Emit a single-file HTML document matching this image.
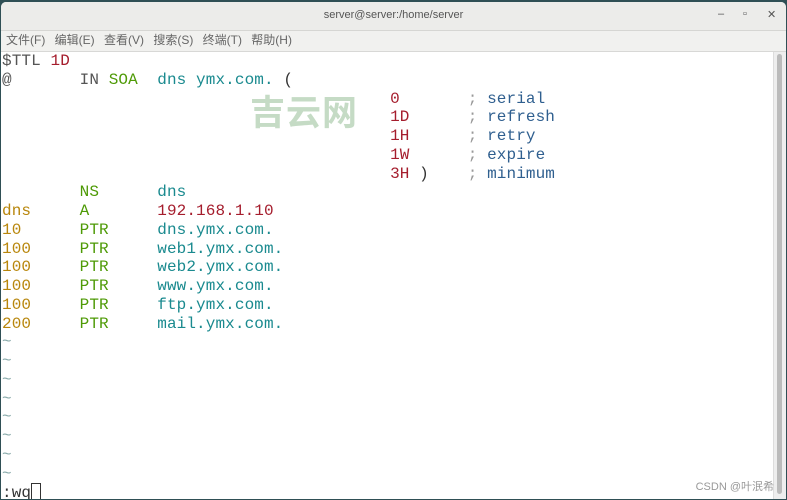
<!DOCTYPE html>
<html><head><meta charset="utf-8"><style>
body{margin:0;width:787px;height:500px;overflow:hidden;background:#2f4f55;font-family:"Liberation Sans","Noto Sans CJK SC",sans-serif;position:relative}
.win{position:absolute;left:1px;top:2px;width:785px;height:497px;background:#fff;border-radius:5px 5px 0 0;overflow:hidden}
.title{height:28px;background:#ececea;border-bottom:1px solid #d6d6d3;text-align:center;font-size:11px;color:#555;line-height:26px}
.ctl{position:absolute;top:6px;font-size:11px;color:#555}
.menu{height:20px;background:#f1f1ef;border-bottom:1px solid #d8d8d6;font-size:12px;color:#666;line-height:19px;padding-left:5px;word-spacing:6px}
.term{position:absolute;left:1px;top:50px;font-family:"Liberation Mono",monospace;font-size:16px;line-height:18.75px;white-space:pre;color:#333;letter-spacing:0.1px}
.sb{position:absolute;right:0;top:50px;width:12px;height:447px;background:#eee;border-left:1px solid #ddd}
.sb div{position:absolute;left:3px;top:2px;width:5px;height:440px;background:#bbb;border-radius:3px}
.r{color:#a51d2d}.g{color:#4e9a06}.c{color:#1a8a8f}.b{color:#2f5f8f}.o{color:#b8860b}.p{color:#555}.t{color:#8aa}.s{color:#999}
.wm{position:absolute;left:249px;top:83px;font-size:35px;color:#c5dbc5;font-weight:bold;letter-spacing:1px}
.csdn{position:absolute;right:12px;bottom:5px;font-size:11px;color:#999}
.cur{display:inline-block;width:10px;height:18px;border:1px solid #333;vertical-align:-4px;box-sizing:border-box}
</style></head><body>
<div class="win">
<div class="title">server@server:/home/server</div>
<span class="ctl" style="left:717px">–</span><span class="ctl" style="left:742px">▫</span><span class="ctl" style="left:766px">✕</span>
<div class="menu">文件(F) 编辑(E) 查看(V) 搜索(S) 终端(T) 帮助(H)</div>
<div class="wm">吉云网</div>
<div class="term"><span class="p">$TTL</span> <span class="r">1D</span>
<span class="p">@</span>       <span class="p">IN</span> <span class="g">SOA</span>  <span class="c">dns ymx.com.</span> (
                                        <span class="r">0</span>       <span class="s">;</span> <span class="b">serial</span>
                                        <span class="r">1D</span>      <span class="s">;</span> <span class="b">refresh</span>
                                        <span class="r">1H</span>      <span class="s">;</span> <span class="b">retry</span>
                                        <span class="r">1W</span>      <span class="s">;</span> <span class="b">expire</span>
                                        <span class="r">3H</span> )    <span class="s">;</span> <span class="b">minimum</span>
        <span class="g">NS</span>      <span class="c">dns</span>
<span class="o">dns</span>     <span class="g">A</span>       <span class="r">192.168.1.10</span>
<span class="o">10</span>      <span class="g">PTR</span>     <span class="c">dns.ymx.com.</span>
<span class="o">100</span>     <span class="g">PTR</span>     <span class="c">web1.ymx.com.</span>
<span class="o">100</span>     <span class="g">PTR</span>     <span class="c">web2.ymx.com.</span>
<span class="o">100</span>     <span class="g">PTR</span>     <span class="c">www.ymx.com.</span>
<span class="o">100</span>     <span class="g">PTR</span>     <span class="c">ftp.ymx.com.</span>
<span class="o">200</span>     <span class="g">PTR</span>     <span class="c">mail.ymx.com.</span>
<span class="t">~</span>
<span class="t">~</span>
<span class="t">~</span>
<span class="t">~</span>
<span class="t">~</span>
<span class="t">~</span>
<span class="t">~</span>
<span class="t">~</span>
:wq<span class="cur"></span></div>
<div class="sb"><div></div></div>
<div class="csdn">CSDN @叶泯希</div>
</div>
</body></html>
